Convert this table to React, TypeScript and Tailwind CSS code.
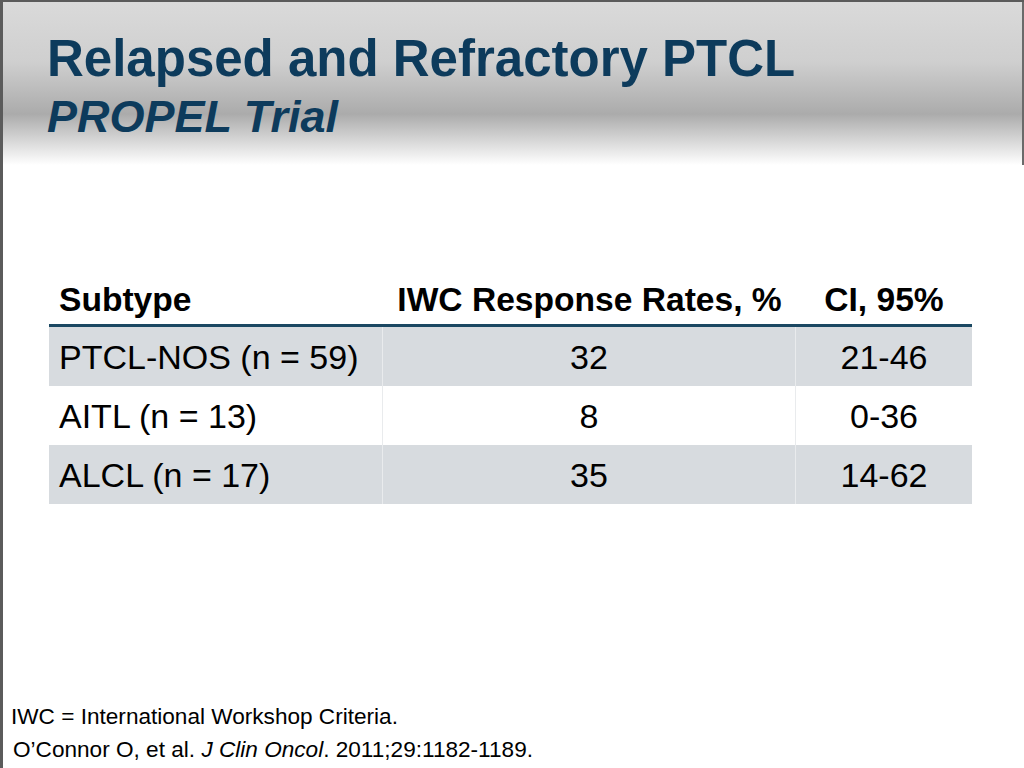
import React from 'react'

const rows = [
  { subtype: 'PTCL-NOS (n = 59)', rate: '32', ci: '21-46', shaded: true },
  { subtype: 'AITL (n = 13)', rate: '8', ci: '0-36', shaded: false },
  { subtype: 'ALCL (n = 17)', rate: '35', ci: '14-62', shaded: true },
]

export default function App() {
  return (
    <div
      className="w-[1024px] h-[768px] flex flex-col bg-white border-t-2 border-l-[3px] border-[#5b5b5b] overflow-hidden"
      style={{ fontFamily: '"Liberation Sans", Arial, sans-serif' }}
    >
      {/* header band */}
      <div className="h-[163px] shrink-0 border-r-2 border-[#6a6a6a] bg-[linear-gradient(to_bottom,#dadada_0px,#cfcfcf_60px,#ababab_112px,#ffffff_163px)] pl-[44px] pt-[31px] text-[#0d3b5c]">
        <h1 className="text-[51px] font-bold leading-none">Relapsed and Refractory PTCL</h1>
        <h2 className="mt-[10px] text-[45px] font-bold italic leading-none">PROPEL Trial</h2>
      </div>

      {/* table */}
      <div className="ml-[46px] mt-[105px] w-[923px] text-black">
        <div className="flex h-[57px] items-end pb-[7px] border-b-[3px] border-[#1b4862] text-[33.6px] font-bold leading-none">
          <div className="w-[334px] pl-[10px]">Subtype</div>
          <div className="w-[413px] text-center">IWC Response Rates, %</div>
          <div className="w-[176px] text-center">CI, 95%</div>
        </div>
        {rows.map((r) => (
          <div
            key={r.subtype}
            className={`flex h-[59px] items-center text-[34px] leading-none ${r.shaded ? 'bg-[#d7dbdf]' : 'bg-white'}`}
          >
            <div className="w-[334px] h-full flex items-center pl-[10px] border-r border-[#e9ebed]">{r.subtype}</div>
            <div className="w-[413px] h-full flex items-center justify-center border-r border-[#e9ebed]">{r.rate}</div>
            <div className="w-[176px] h-full flex items-center justify-center">{r.ci}</div>
          </div>
        ))}
      </div>

      <div className="flex-1" />

      {/* footnotes */}
      <div className="pl-[8px] pb-[2px] text-[22.6px] leading-[33px] text-black">
        <p>IWC = International Workshop Criteria.</p>
        <p className="pl-[2px]">
          O’Connor O, et al. <span className="italic">J Clin Oncol</span>. 2011;29:1182-1189.
        </p>
      </div>
    </div>
  )
}
